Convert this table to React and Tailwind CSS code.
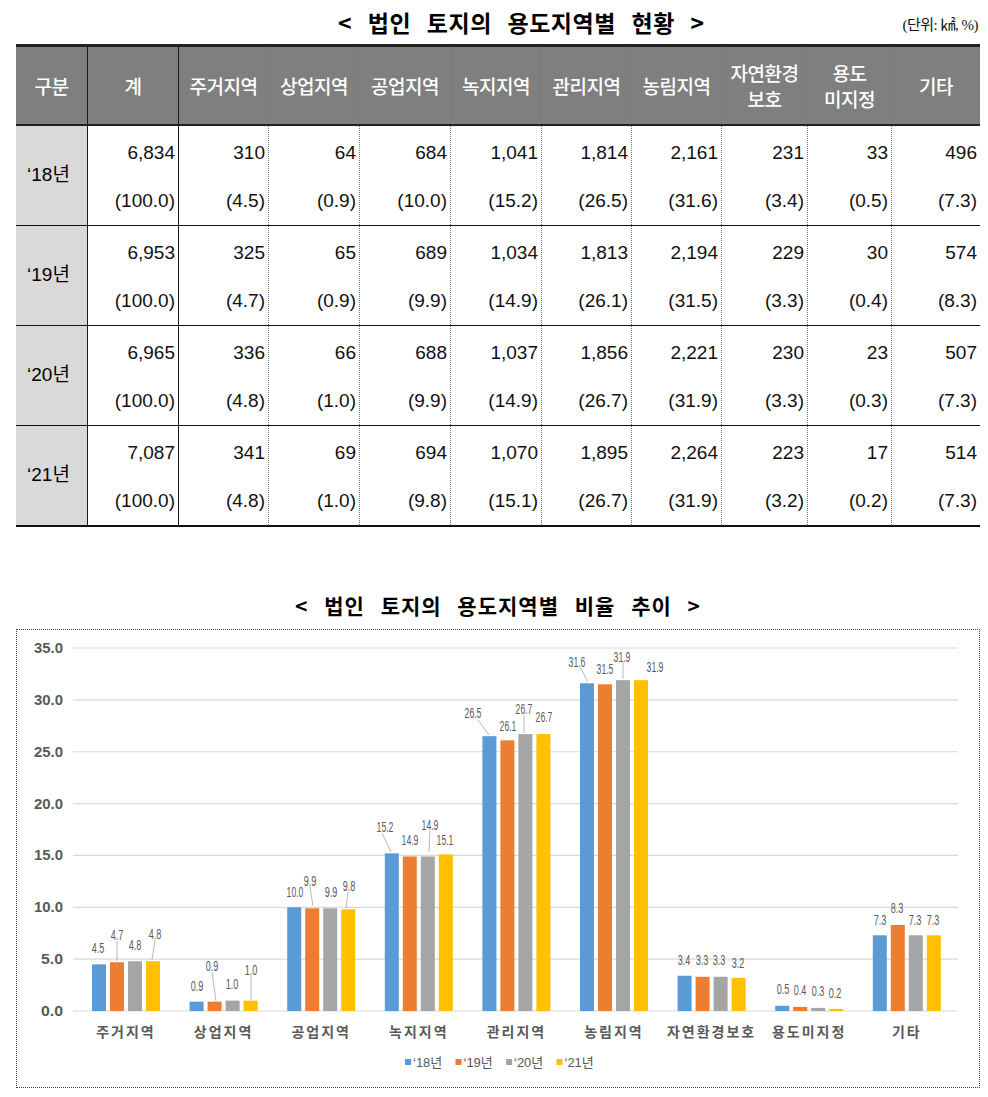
const KR = "font-['Liberation_Sans','Noto_Sans_CJK_KR',sans-serif]";

const widths = "grid-cols-[72px_91px_90px_91px_91px_91px_90px_90px_86px_84px_88px]";

const headers = [
  ["구분"],
  ["계"],
  ["주거지역"],
  ["상업지역"],
  ["공업지역"],
  ["녹지지역"],
  ["관리지역"],
  ["농림지역"],
  ["자연환경", "보호"],
  ["용도", "미지정"],
  ["기타"],
];

const rows = [
  {
    year: "‘18년",
    v: ["6,834", "310", "64", "684", "1,041", "1,814", "2,161", "231", "33", "496"],
    p: ["(100.0)", "(4.5)", "(0.9)", "(10.0)", "(15.2)", "(26.5)", "(31.6)", "(3.4)", "(0.5)", "(7.3)"],
  },
  {
    year: "‘19년",
    v: ["6,953", "325", "65", "689", "1,034", "1,813", "2,194", "229", "30", "574"],
    p: ["(100.0)", "(4.7)", "(0.9)", "(9.9)", "(14.9)", "(26.1)", "(31.5)", "(3.3)", "(0.4)", "(8.3)"],
  },
  {
    year: "‘20년",
    v: ["6,965", "336", "66", "688", "1,037", "1,856", "2,221", "230", "23", "507"],
    p: ["(100.0)", "(4.8)", "(1.0)", "(9.9)", "(14.9)", "(26.7)", "(31.9)", "(3.3)", "(0.3)", "(7.3)"],
  },
  {
    year: "‘21년",
    v: ["7,087", "341", "69", "694", "1,070", "1,895", "2,264", "223", "17", "514"],
    p: ["(100.0)", "(4.8)", "(1.0)", "(9.8)", "(15.1)", "(26.7)", "(31.9)", "(3.2)", "(0.2)", "(7.3)"],
  },
];

// right border per column: solid for the first two, dotted for the rest
const sep = (i) =>
  i < 2 ? "border-r border-[#1a1a1a]" : i < 10 ? "border-r border-dotted border-[#777]" : "";

// chart data
const cats = ["주거지역", "상업지역", "공업지역", "녹지지역", "관리지역", "농림지역", "자연환경보호", "용도미지정", "기타"];
const data = [
  [4.5, 4.7, 4.8, 4.8],
  [0.9, 0.9, 1.0, 1.0],
  [10.0, 9.9, 9.9, 9.8],
  [15.2, 14.9, 14.9, 15.1],
  [26.5, 26.1, 26.7, 26.7],
  [31.6, 31.5, 31.9, 31.9],
  [3.4, 3.3, 3.3, 3.2],
  [0.5, 0.4, 0.3, 0.2],
  [7.3, 8.3, 7.3, 7.3],
];
// data label centres, read off the reference
const labelPos = [
  [[98, 948], [117, 935], [135, 945], [155, 934]],
  [[197, 986], [212, 966], [232, 984], [251, 970]],
  [[295, 892], [310, 881], [331, 892], [349, 886]],
  [[385, 827], [410, 840], [430, 825], [445, 840]],
  [[473, 713], [508, 726], [524, 709], [544, 717]],
  [[577, 662], [605, 669], [622, 657], [655, 667]],
  [[684, 960], [702, 960], [719, 960], [738, 963]],
  [[783, 989], [800, 990], [818, 991], [835, 993]],
  [[880, 920], [897, 908], [915, 920], [933, 920]],
];
const leaders = [
  [117, 941, 117, 961],
  [155, 940, 152, 960],
  [212, 972, 216, 1001],
  [251, 976, 251, 1000],
  [310, 887, 313, 906],
  [348, 892, 346, 908],
  [382, 833, 391, 852],
  [430, 831, 429, 852],
  [478, 720, 489, 735],
  [524, 715, 524, 733],
  [580, 667, 588, 682],
  [623, 662, 623, 679],
];
const colors = ["#5b9bd5", "#ed7d31", "#a5a5a5", "#ffc000"];
const Y0 = 1011;
const K = 10.371;
const cx = (i) => 125 + 97.6 * i;

const Chart = () => (
  <svg width="962" height="457" viewBox="17 630 962 457">
    {[0, 5, 10, 15, 20, 25, 30, 35].map((t) => (
      <g key={t}>
        <line x1="73" x2="958" y1={Y0 - t * K} y2={Y0 - t * K} stroke="#d9d9d9" strokeWidth="1.2" />
        <text
          x="63"
          y={Y0 - t * K}
          textAnchor="end"
          dominantBaseline="central"
          fontSize="14"
          fontWeight="bold"
          fill="#595959"
          fontFamily="'Liberation Sans', sans-serif"
          textLength={t >= 10 ? 29 : 22}
          lengthAdjust="spacingAndGlyphs"
        >
          {t.toFixed(1)}
        </text>
      </g>
    ))}

    {data.map((g, i) =>
      g.map((v, j) => {
        const h = v * K;
        return (
          <rect key={`${i}-${j}`} x={cx(i) - 33 + j * 18} y={Y0 - h} width="14" height={h} fill={colors[j]} />
        );
      })
    )}

    {leaders.map(([x1, y1, x2, y2], k) => (
      <line key={k} x1={x1} y1={y1} x2={x2} y2={y2} stroke="#a6a6a6" strokeWidth="0.8" />
    ))}

    {data.map((g, i) =>
      g.map((v, j) => {
        const s = v.toFixed(1);
        const [x, y] = labelPos[i][j];
        return (
          <text
            key={`l${i}-${j}`}
            x={x}
            y={y}
            textAnchor="middle"
            dominantBaseline="central"
            fontSize="14"
            fill="#595959"
            fontFamily="'Liberation Sans', sans-serif"
            textLength={s.length * 4.2}
            lengthAdjust="spacingAndGlyphs"
          >
            {s}
          </text>
        );
      })
    )}

    {cats.map((c, i) => (
      <text
        key={c}
        x={cx(i) + 1}
        y="1031"
        textAnchor="middle"
        dominantBaseline="central"
        fontSize="14"
        fontWeight="bold"
        letterSpacing="2"
        fill="#595959"
        fontFamily="'Noto Sans CJK KR', sans-serif"
      >
        {c}
      </text>
    ))}

    {["‘18년", "‘19년", "‘20년", "‘21년"].map((t, j) => {
      const x = 405 + j * 50.5;
      return (
        <g key={t}>
          <rect x={x} y="1059" width="6" height="6" fill={colors[j]} />
          <text
            x={x + 8}
            y="1062"
            dominantBaseline="central"
            fontSize="13"
            fill="#595959"
            fontFamily="'Liberation Sans', 'Noto Sans CJK KR', sans-serif"
          >
            {t}
          </text>
        </g>
      );
    })}
  </svg>
);

export default function App() {
  return (
    <div className={`w-[988px] h-[1097px] bg-white pl-[16px] text-black ${KR}`}>
      <div className="w-[964px]">
        {/* title */}
        <div className="h-[44px] flex items-center">
          <div className="ml-[322px] font-['Noto_Sans_CJK_KR',sans-serif] font-bold text-[23px] [word-spacing:10px] tracking-[0.5px]">
            {"<  법인 토지의 용도지역별 현황 >"}
          </div>
          <div className="ml-auto mr-[2px] mt-[6px] font-['Liberation_Serif','Noto_Sans_CJK_KR',serif] text-[15px] tracking-[-0.5px] text-[#111]">
            (단위: ㎢, %)
          </div>
        </div>

        {/* table header */}
        <div
          className={`grid ${widths} h-[82px] bg-[#7f7f7f] border-t-[3px] border-b-2 border-[#222] text-white font-['Noto_Sans_CJK_KR',sans-serif] font-medium text-[19px] leading-[26px] tracking-[-0.5px]`}
        >
          {headers.map((h, i) => (
            <div key={i} className={`flex flex-col items-center justify-center ${sep(i)}`}>
              {h.map((l) => (
                <span key={l}>{l}</span>
              ))}
            </div>
          ))}
        </div>

        {/* table body */}
        {rows.map((r, ri) => (
          <div
            key={r.year}
            className={`grid ${widths} h-[100px] ${ri === rows.length - 1 ? "border-b-2 h-[101px]" : "border-b"} border-[#111]`}
          >
            <div className={`bg-[#d9d9d9] flex items-center justify-center pr-[6px] text-[19px] ${sep(0)}`}>
              {r.year}
            </div>
            {r.v.map((v, i) => (
              <div
                key={i}
                className={`flex flex-col items-end pt-[16px] gap-[26px] pr-[3px] text-[19px] leading-[22px] text-[#111] ${sep(i + 1)}`}
              >
                <span>{v}</span>
                <span>{r.p[i]}</span>
              </div>
            ))}
          </div>
        ))}

        {/* chart title */}
        <div className="mt-[63px] h-[32px] flex items-center justify-center font-['Noto_Sans_CJK_KR',sans-serif] font-bold text-[21px] [word-spacing:10px] tracking-[1px]">
          {"< 법인 토지의 용도지역별 비율 추이 >"}
        </div>

        {/* chart */}
        <div className="mt-[7px] w-[964px] h-[459px] border border-dotted border-[#444]">
          <Chart />
        </div>
      </div>
    </div>
  );
}
